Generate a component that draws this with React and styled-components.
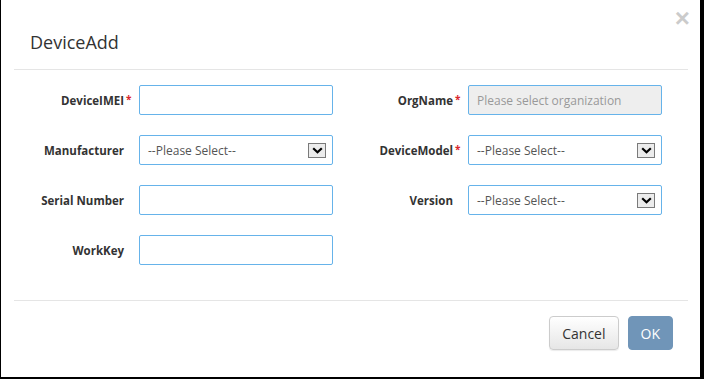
import React from "react";
import styled, { createGlobalStyle } from "styled-components";

const GlobalStyle = createGlobalStyle`
  html, body {
    margin: 0;
    padding: 0;
    background: #000;
  }
  body {
    font-family: "Open Sans", "Liberation Sans", sans-serif;
    color: #333;
  }
`;

const Page = styled.div`
  width: 704px;
  height: 379px;
  background: #000;
  padding-left: 1px;
  box-sizing: border-box;
`;

const Dialog = styled.div`
  position: relative;
  width: 699px;
  height: 377px;
  background: #fff;
  display: flex;
  flex-direction: column;
`;

const Header = styled.div`
  margin: 0 12px 0 13px;
  padding: 29px 16px 14px;
  border-bottom: 1px solid #e5e5e5;
`;

const Title = styled.h4`
  margin: 0;
  font-size: 18px;
  line-height: 26px;
  font-weight: 400;
  color: #333;
`;

const Close = styled.button`
  position: absolute;
  top: 5px;
  right: 10px;
  border: none;
  background: none;
  padding: 0;
  font-family: "Liberation Sans", Arial, sans-serif;
  font-size: 26px;
  font-weight: 700;
  line-height: 26px;
  color: #000;
  opacity: 0.2;
  cursor: pointer;
`;

const Body = styled.div`
  padding: 15px 0 35px 9px;
  display: grid;
  grid-template-columns: 329px 329px;
  row-gap: 20px;
`;

const Field = styled.div`
  display: flex;
  align-items: center;
  height: 30px;
`;

const Label = styled.label`
  width: 114px;
  text-align: right;
  font-size: 11.5px;
  font-weight: 700;
  color: #333;
  white-space: nowrap;
`;

const Star = styled.span`
  width: 8px;
  height: 14px;
  margin-right: 7px;
  padding-left: 2px;
  box-sizing: border-box;
  color: #d9262b;
  font-size: 10px;
  font-weight: 700;
  line-height: 12px;
  align-self: center;
`;

const Input = styled.input`
  width: 194px;
  height: 30px;
  box-sizing: border-box;
  border: 1px solid #66b3ea;
  border-radius: 2px;
  padding: 0 8px;
  font-family: "Open Sans", "Liberation Sans", sans-serif;
  font-size: 12px;
  color: #555;
  background: ${(p) => (p.disabled ? "#eee" : "#fff")};
  outline: none;
  &::placeholder {
    color: #999;
  }
`;

const Select = styled.div`
  width: 194px;
  height: 30px;
  box-sizing: border-box;
  border: 1px solid #66b3ea;
  border-radius: 2px;
  padding: 0 6px 0 8px;
  display: flex;
  align-items: center;
  justify-content: space-between;
  font-size: 12px;
  color: #555;
  background: #fff;
`;

const ArrowBox = styled.span`
  width: 18px;
  height: 15px;
  box-sizing: border-box;
  border: 1px solid #7a7a7a;
  background: #ececec;
  display: flex;
  align-items: center;
  justify-content: center;
`;

const Footer = styled.div`
  margin: 0 12px 0 13px;
  border-top: 1px solid #e5e5e5;
  padding: 15px 15px 0 0;
  display: flex;
  justify-content: flex-end;
  gap: 9px;
`;

const Button = styled.button`
  height: 34px;
  padding: 0 12px;
  border-radius: 4px;
  font-family: "Open Sans", "Liberation Sans", sans-serif;
  font-size: 14px;
  cursor: pointer;
  border: 1px solid ${(p) => (p.primary ? "#7095b8" : "#ccc")};
  color: ${(p) => (p.primary ? "#fff" : "#333")};
  background: ${(p) =>
    p.primary ? "#7095b8" : "linear-gradient(#fff, #e6e6e6)"};
  box-shadow: ${(p) => (p.primary ? "none" : "0 1px 1px rgba(0,0,0,0.08)")};
`;

function Chevron() {
  return (
    <svg width="11" height="7" viewBox="0 0 11 7">
      <path d="M1.2 1.2 L5.5 5.2 L9.8 1.2" fill="none" stroke="#000" strokeWidth="2.2" />
    </svg>
  );
}

function FormField({ label, required, children }) {
  return (
    <Field>
      <Label>{label}</Label>
      <Star>{required ? "*" : ""}</Star>
      {children}
    </Field>
  );
}

function Dropdown() {
  return (
    <Select>
      <span>--Please Select--</span>
      <ArrowBox>
        <Chevron />
      </ArrowBox>
    </Select>
  );
}

export default function App() {
  return (
    <Page>
      <GlobalStyle />
      <Dialog>
        <Close aria-label="close">×</Close>
        <Header>
          <Title>DeviceAdd</Title>
        </Header>
        <Body>
          <FormField label="DeviceIMEI" required>
            <Input />
          </FormField>
          <FormField label="OrgName" required>
            <Input disabled placeholder="Please select organization" />
          </FormField>
          <FormField label="Manufacturer">
            <Dropdown />
          </FormField>
          <FormField label="DeviceModel" required>
            <Dropdown />
          </FormField>
          <FormField label="Serial Number">
            <Input />
          </FormField>
          <FormField label="Version">
            <Dropdown />
          </FormField>
          <FormField label="WorkKey">
            <Input />
          </FormField>
        </Body>
        <Footer>
          <Button>Cancel</Button>
          <Button primary>OK</Button>
        </Footer>
      </Dialog>
    </Page>
  );
}
